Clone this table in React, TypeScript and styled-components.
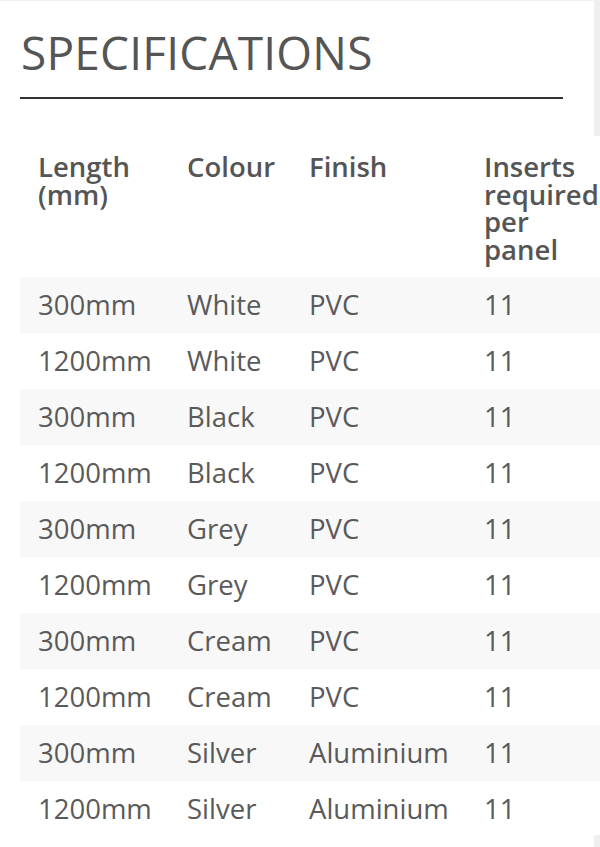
import React from 'react';
import styled, { createGlobalStyle } from 'styled-components';

const GlobalStyle = createGlobalStyle`
   html, body {
      margin: 0;
      padding: 0;
      background: #fff;
      overflow: hidden;
   }
   body {
      font-family: 'Open Sans', 'Noto Sans', sans-serif;
      color: #555;
   }
`;

const Page = styled.div`
   width: 600px;
   height: 847px;
   overflow: hidden;
   padding: 0 0 0 20px;
   box-sizing: border-box;
   border-top: 1px solid #f2f2f2;
`;

const Title = styled.h2`
   margin: 24px 0 0 0;
   width: 543px;
   font-size: 46px;
   line-height: 55px;
   font-weight: 400;
   letter-spacing: 0.2px;
   text-indent: 1px;
   color: #555;
   padding-bottom: 17px;
   border-bottom: 2px solid #333;
`;

const Table = styled.table`
   margin-top: 40px;
   border-collapse: collapse;
   table-layout: fixed;
   width: 596px;
   font-size: 27.5px;
`;

const HeadCell = styled.th<{ $w: number; $pr: number }>`
   box-sizing: border-box;
   width: ${p => p.$w}px;
   text-align: left;
   vertical-align: top;
   font-weight: 600;
   line-height: 27.5px;
   padding: 14px ${p => p.$pr}px 14px 18px;
   color: #555;
`;

const Row = styled.tr<{ $shade: boolean }>`
   background: ${p => (p.$shade ? '#f8f8f8' : '#fff')};
`;

const Cell = styled.td`
   padding: 14px 0 14px 18px;
   line-height: 28px;
   white-space: nowrap;
   color: #5a5a5a;
`;

const EdgeStrip = styled.div<{ $top: number; $height: number }>`
   position: fixed;
   right: 0;
   top: ${p => p.$top}px;
   width: 6px;
   height: ${p => p.$height}px;
   background: #efefef;
`;

const columns = [
   { label: 'Length (mm)', w: 149, pr: 0 },
   { label: 'Colour', w: 122, pr: 0 },
   { label: 'Finish', w: 175, pr: 0 },
   { label: 'Inserts required per panel', w: 150, pr: 16 }
];

const rows = [
   ['300mm', 'White', 'PVC', '11'],
   ['1200mm', 'White', 'PVC', '11'],
   ['300mm', 'Black', 'PVC', '11'],
   ['1200mm', 'Black', 'PVC', '11'],
   ['300mm', 'Grey', 'PVC', '11'],
   ['1200mm', 'Grey', 'PVC', '11'],
   ['300mm', 'Cream', 'PVC', '11'],
   ['1200mm', 'Cream', 'PVC', '11'],
   ['300mm', 'Silver', 'Aluminium', '11'],
   ['1200mm', 'Silver', 'Aluminium', '11']
];

export default function App() {
   return (
      <>
         <GlobalStyle />
         <Page>
            <Title>SPECIFICATIONS</Title>
            <Table>
               <thead>
                  <tr>
                     {columns.map(c => (
                        <HeadCell key={c.label} $w={c.w} $pr={c.pr}>
                           {c.label}
                        </HeadCell>
                     ))}
                  </tr>
               </thead>
               <tbody>
                  {rows.map((r, i) => (
                     <Row key={i} $shade={i % 2 === 0}>
                        {r.map((v, j) => (
                           <Cell key={j}>{v}</Cell>
                        ))}
                     </Row>
                  ))}
               </tbody>
            </Table>
         </Page>
         <EdgeStrip $top={0} $height={136} />
         <EdgeStrip $top={835} $height={12} />
      </>
   );
}
